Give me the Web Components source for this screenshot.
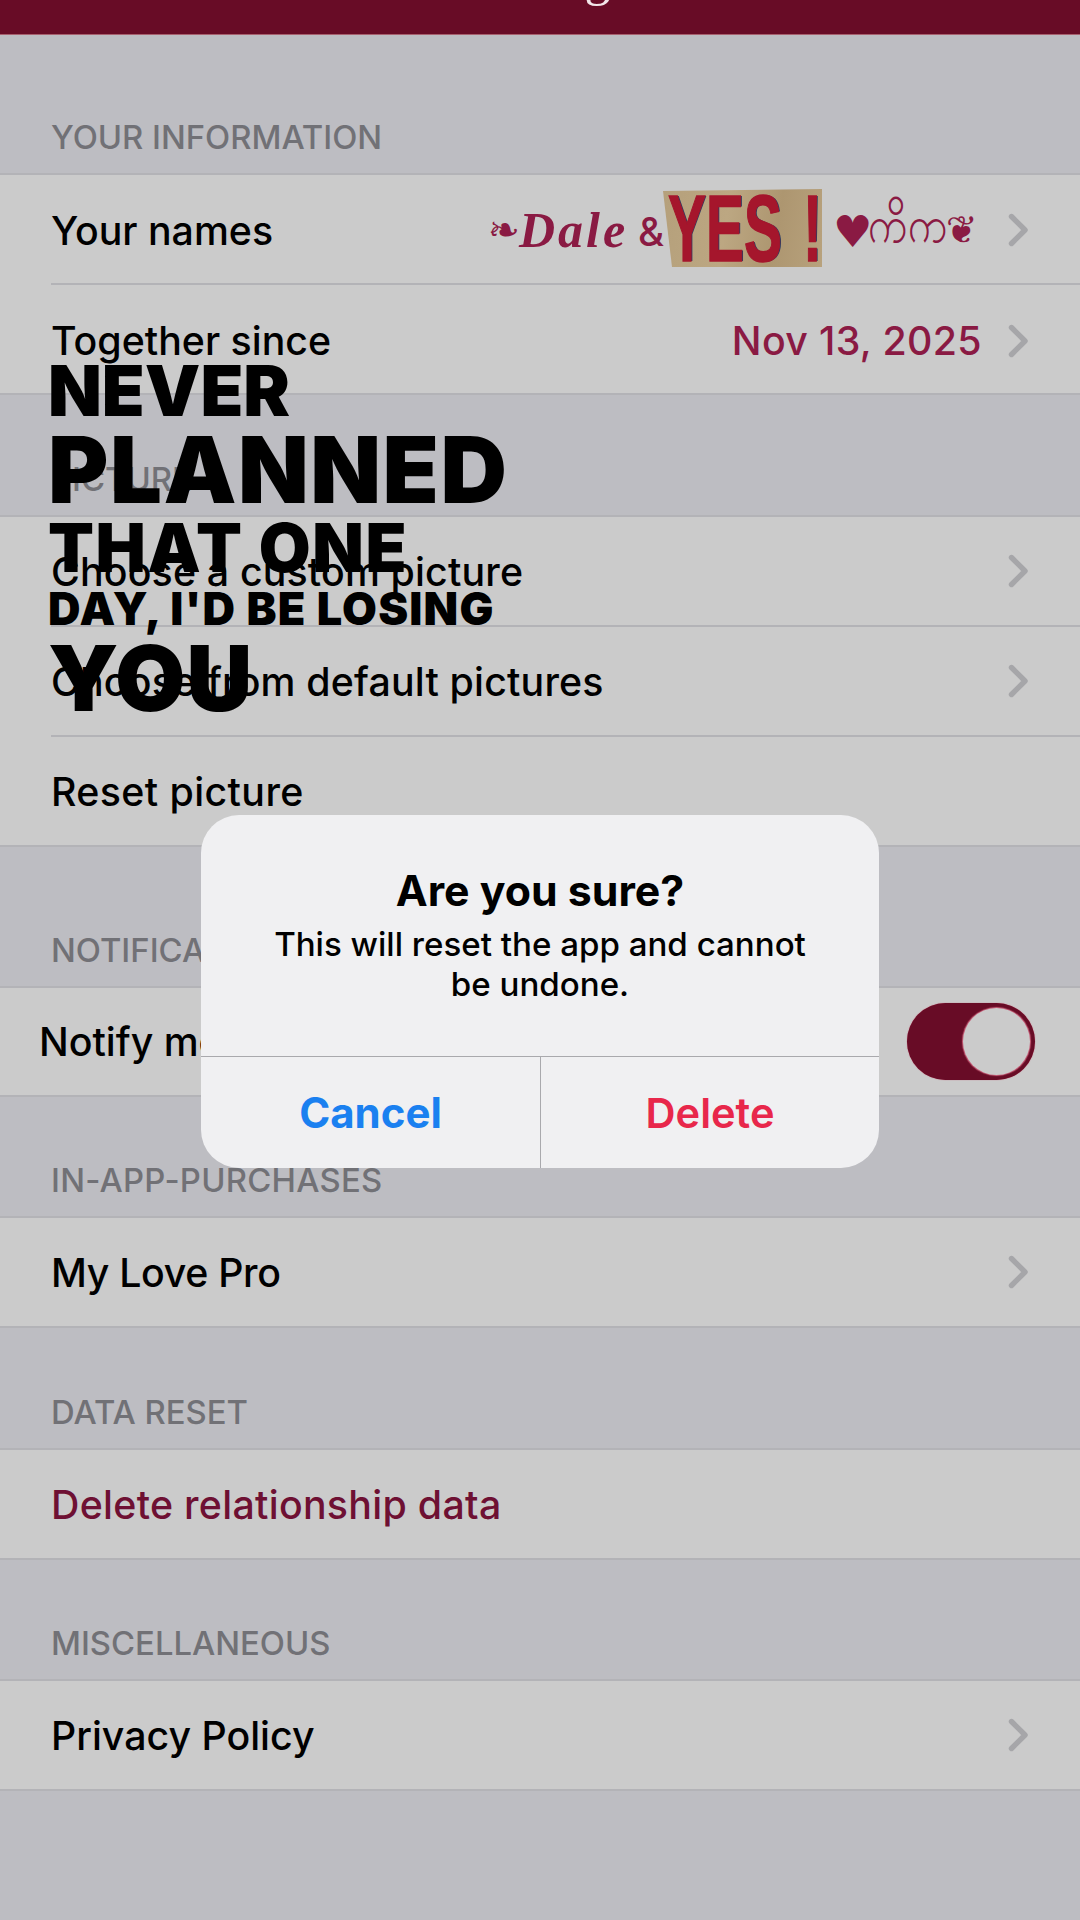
<!DOCTYPE html>
<html lang="en"><head><meta charset="utf-8"><title>Settings</title>
<style>
html,body{margin:0;padding:0;width:1080px;height:1920px;overflow:hidden;background:#bdbdc2;font-family:Inter,"Liberation Sans",sans-serif}
</style></head><body>
<settings-page>
  <app-navbar>Settings</app-navbar>
  <settings-section label="YOUR INFORMATION" style="--gap:84px">
    <settings-row chevron style="padding-top:2px"><span>Your names</span><names-value slot="value"></names-value></settings-row>
    <settings-row chevron style="padding-top:3px"><span>Together since</span><span slot="value" style="letter-spacing:.35px">Nov 13, 2025</span></settings-row>
  </settings-section>
  <settings-section label="PICTURE" style="--gap:67px">
    <settings-row chevron style="letter-spacing:.16px">Choose a custom picture</settings-row>
    <settings-row chevron style="letter-spacing:.18px">Choose from default pictures</settings-row>
    <settings-row style="letter-spacing:.4px">Reset picture</settings-row>
  </settings-section>
  <settings-section label="NOTIFICATIONS" style="--gap:86px">
    <settings-row outdent style="height:109px"><span>Notify me</span><app-toggle slot="value"></app-toggle></settings-row>
  </settings-section>
  <settings-section label="IN-APP-PURCHASES" style="--gap:66px;letter-spacing:.25px">
    <settings-row chevron style="letter-spacing:-.33px">My Love Pro</settings-row>
  </settings-section>
  <settings-section label="DATA RESET" style="--gap:67px">
    <settings-row danger style="letter-spacing:.3px">Delete relationship data</settings-row>
  </settings-section>
  <settings-section label="MISCELLANEOUS" style="--gap:66px">
    <settings-row chevron>Privacy Policy</settings-row>
  </settings-section>
  <lyric-overlay></lyric-overlay>
  <alert-dialog title-text="Are you sure?" message="This will reset the app and cannot be undone." cancel="Cancel" confirm="Delete"></alert-dialog>
</settings-page>
<script>
const def=(name,html)=>customElements.define(name,class extends HTMLElement{
  connectedCallback(){ if(this.shadowRoot)return; const r=this.attachShadow({mode:'open'}); r.innerHTML=typeof html==='function'?html(this):html; }
});
def('settings-page',`<style>:host{display:block;position:relative;width:1080px;height:1920px;overflow:hidden;background:#bdbdc2;color:#000;font-family:Inter,"Liberation Sans",sans-serif}</style><slot></slot>`);
def('app-navbar',`<style>:host{display:flex;justify-content:center;align-items:flex-end;height:35px;overflow:hidden;background:#680c26;border-bottom:1px solid #a8616f;box-sizing:border-box}
span{font:500 52px/60px "Liberation Serif",serif;color:#f3e6e9;padding-bottom:26px;margin-left:14px;flex:none}</style><span><slot></slot></span>`);
def('settings-section',h=>`<style>:host{display:block;margin-top:var(--gap,67px)}
.h{height:36px;line-height:36px;margin:0 0 19px 51px;font-size:32.8px;font-weight:500;color:#717176;white-space:nowrap}
.l{background:#cbcbcb;box-shadow:inset 0 1px #b3b3b7,0 -1px #b3b3b7,inset 0 -1px #b3b3b7,0 1px #b3b3b7}</style>
<div class="h">${h.getAttribute('label')}</div><div class="l"><slot></slot></div>`);
def('settings-row',h=>`<style>:host{display:flex;align-items:center;box-sizing:border-box;height:110px;margin-left:51px;padding-right:51px;font-size:39.3px;font-weight:500;color:#000;white-space:nowrap;gap:8px}
:host(:not(:last-child)){box-shadow:0 1px #b3b3b7,inset 0 -1px #b3b3b7}
:host([danger]){color:#6e1033}
:host([outdent]){margin-left:39px;padding-right:45px}
.t{flex:1;min-width:0}
.v{color:#8a1a43;font-weight:500;display:flex;align-items:center}
svg{flex:none;margin-left:18px;width:21px;height:34px;display:block}
</style><div class="t"><slot></slot></div><div class="v"><slot name="value"></slot></div>
${h.hasAttribute('chevron')?'<svg viewBox="0 0 21 34"><path d="M3.5 3.5 17 17 3.5 30.5" fill="none" stroke="#a6a6a9" stroke-width="5.4" stroke-linecap="round" stroke-linejoin="round"/></svg>':''}`);
def('names-value',`<style>:host{display:flex;align-items:center;height:80px;color:#8a1a43;margin-top:-4px;letter-spacing:0}
.orn{font:38px "DejaVu Sans",sans-serif;width:31px;margin-top:4px}
.dale{font:italic 700 50px "Liberation Serif",serif;letter-spacing:3px;margin-top:4px;width:119px}
.amp{font:500 40px Inter,sans-serif;width:27px;margin:6px -2px 0 0}
.heart{font:44px "DejaVu Sans",sans-serif;margin:6px 0 0 11px;width:35px}
.script{display:flex;align-items:center;width:114px;margin-top:4px}
.my{font:300 40px "DejaVu Sans",sans-serif;display:inline-block;transform:scaleY(1.25);width:78px}
.fh{font:38px "DejaVu Sans",sans-serif;width:36px}
</style><span class="orn">❧</span><span class="dale">Dale</span><span class="amp">&amp;</span><yes-sticker></yes-sticker><span class="heart">♥</span><span class="script"><span class="my">ကိဂာ</span><span class="fh">❦</span></span>`);
def('yes-sticker',`<style>:host{display:flex;flex:none;box-sizing:border-box;width:159px;height:78px;padding:0 5px;justify-content:space-between;align-items:center;
background:linear-gradient(100deg,#b5a07b,#bca782 40%,#ad9670 70%,#b8a27d);clip-path:polygon(0 2px,100% 0,100% 100%,9px 100%)}
span{font:700 95px/78px "Liberation Sans",sans-serif;color:#a5162c;display:block;transform-origin:0 50%;white-space:nowrap;text-shadow:2px 0 #2b3c62;-webkit-text-stroke:1.5px #a5162c}
.y{width:116px;transform:scaleX(.6)}.b{width:14px;transform:scaleX(.6)}</style><span class="y">YES</span><span class="b">!</span>`);
def('app-toggle',`<style>:host{display:block;position:relative;width:128px;height:77px;border-radius:39px;background:#680c26;box-shadow:0 0 1px #c2415f}
i{display:block;position:absolute;right:5px;top:5px;width:67px;height:67px;border-radius:50%;background:#cbcbcb;box-shadow:0 0 1px 1px #c9607a}</style><i></i>`);
def('lyric-overlay',`<style>:host{position:absolute;left:48px;top:365px;display:flex;flex-direction:column;gap:20px;color:#000;font-family:Inter,sans-serif;font-weight:900;white-space:nowrap}
div{display:block}</style>
<div style="font-size:70px;line-height:51px">NEVER</div>
<div style="font-size:92px;line-height:67px;letter-spacing:1.5px">PLANNED</div>
<div style="font-size:67px;line-height:49px;letter-spacing:1.6px">THAT ONE</div>
<div style="font-size:45px;line-height:33px;letter-spacing:1.2px">DAY, I'D BE LOSING</div>
<div style="font-size:91px;line-height:66px;letter-spacing:1px">YOU</div>`);
def('alert-dialog',h=>`<style>:host{position:absolute;left:201px;top:815px;width:678px;height:353px;border-radius:38px;background:#f0f0f2;display:flex;flex-direction:column;overflow:hidden;text-align:center;font-family:Inter,sans-serif}
.b{height:242px;box-sizing:border-box;padding:52px 60px 0;border-bottom:1px solid #a9a9ad}
h2{margin:0 0 9px;font-size:42.8px;line-height:48px;font-weight:700;color:#000}
p{margin:0;font-size:33.1px;line-height:40px;font-weight:500;color:#000}
.a{flex:1;display:grid;grid-template-columns:339px 339px}
button{all:unset;text-align:center;font-size:42px;font-weight:700;color:#1a80f0}
button+button{border-left:1px solid #a9a9ad;color:#e8274b;font-weight:600;font-size:41.6px}
</style><div class="b"><h2>${h.getAttribute('title-text')}</h2><p>${h.getAttribute('message')}</p></div>
<div class="a"><button>${h.getAttribute('cancel')}</button><button>${h.getAttribute('confirm')}</button></div>`);
</script>
</body></html>
